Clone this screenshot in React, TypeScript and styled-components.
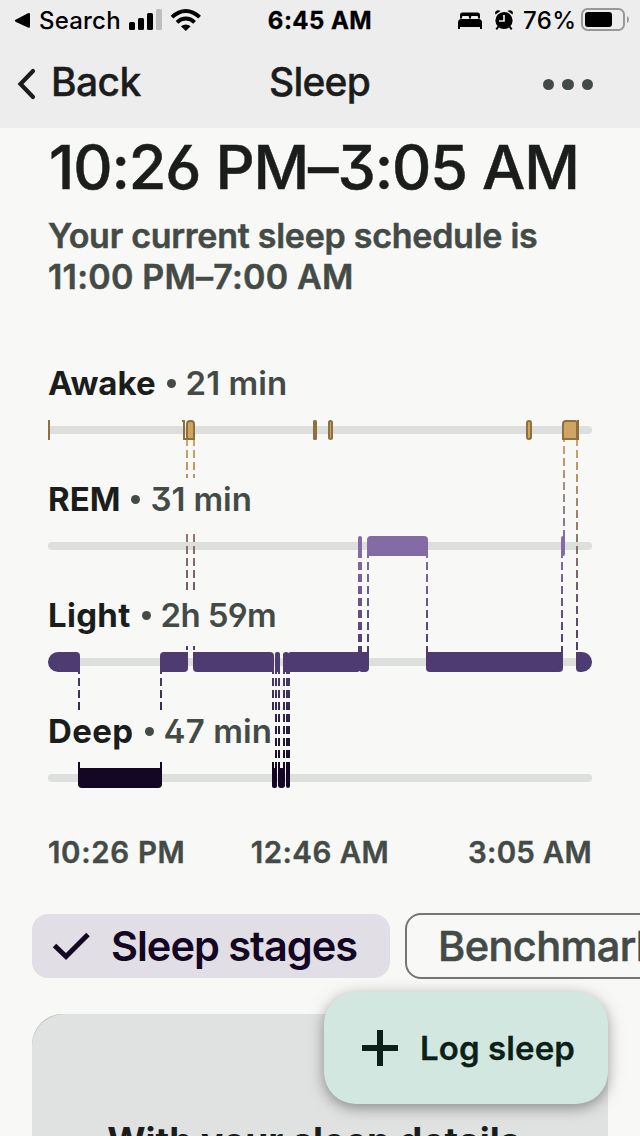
import React from "react";
import styled, { createGlobalStyle } from "styled-components";

const GlobalStyle = createGlobalStyle`
  *, *::before, *::after { box-sizing: border-box; }
  body { margin: 0; background: #f8f9f7; }
`;

const brandFont = `font-family: Inter, "Liberation Sans", sans-serif; font-feature-settings: "calt" 0, "ss01" 1;`;
const systemFont = `font-family: Inter, "Liberation Sans", sans-serif;`;

const Page = styled.div`
  position: relative;
  width: 640px;
  height: 1136px;
  overflow: hidden;
  background: #f8f9f7;
  color: #1b1d1c;
  white-space: nowrap;
  ${systemFont}
`;

const Header = styled.header`
  height: 128px;
  background: #ededed;
`;

const StatusBar = styled.div`
  display: grid;
  grid-template-columns: 1fr auto 1fr;
  height: 40px;
  padding: 0 11px 0 14px;
  color: #000;
  font-size: 24px;
  line-height: 41px;
`;

const StatusGroup = styled.div<{ $end?: boolean }>`
  display: flex;
  align-items: flex-start;
  justify-content: ${(p) => (p.$end ? "flex-end" : "flex-start")};
  svg { display: block; flex: none; }
`;

const StatusText = styled.span<{ $width: number; $tracking: number }>`
  width: ${(p) => p.$width}px;
  font-weight: 500;
  letter-spacing: ${(p) => p.$tracking}px;
`;

const Clock = styled.div`
  margin-right: 3px;
  font-weight: 700;
  letter-spacing: 0.45px;
  -webkit-text-stroke: 0.3px;
`;

const NavBar = styled.nav`
  display: grid;
  grid-template-columns: 1fr auto 1fr;
  align-items: center;
  height: 83px;
  padding: 0 47px 0 17px;
  ${brandFont}
  font-size: 39px;
  font-weight: 500;
  -webkit-text-stroke: 0.4px;
`;

const BackButton = styled.div`
  display: flex;
  align-items: center;
  gap: 14px;
  letter-spacing: -0.6px;
  svg { position: relative; top: 2px; }
`;

const NavTitle = styled.div`
  margin-left: 29px;
  letter-spacing: -0.8px;
`;

const MoreButton = styled.div`
  display: flex;
  justify-content: flex-end;
  gap: 8px;
  padding-top: 6px;
`;

const Dot = styled.i`
  width: 11.5px;
  height: 11.5px;
  border-radius: 50%;
  background: #444b47;
`;

const Main = styled.main`
  padding: 0 32px;
`;

const Section = styled.section`
  padding: 1px 16px 0;
`;

const TimeRange = styled.h1`
  margin: 0;
  padding-left: 1px;
  ${brandFont}
  font-size: 61px;
  font-weight: 500;
  line-height: 76px;
  letter-spacing: -1.12px;
  -webkit-text-stroke: 0.5px;
`;

const Schedule = styled.p`
  margin: 10px 0 0;
  color: #444b47;
  font-size: 34px;
  font-weight: 600;
  line-height: 41px;
  letter-spacing: -0.26px;
  -webkit-text-stroke: 0.5px;
`;

const ScheduleHours = styled.span`
  letter-spacing: 0.22px;
`;

const Chart = styled.div`
  position: relative;
  height: 464px;
  margin-top: 65px;
`;

const ChartDrawing = styled.svg`
  position: absolute;
  left: 0;
  top: 0;
`;

const StageRow = styled.div`
  position: relative;
  height: 116px;
`;

const StageLabel = styled.div`
  display: inline-flex;
  height: 52px;
  padding-right: 2px;
  background: #f8f9f7;
  color: #444b47;
  ${brandFont}
  font-size: 33px;
  font-weight: 600;
  line-height: 42px;
`;

const StageName = styled.span<{ $tracking: number }>`
  color: #1b1d1c;
  font-weight: 700;
  letter-spacing: ${(p) => p.$tracking}px;
`;

const Bullet = styled.i`
  width: 9px;
  height: 9px;
  margin: 17px 10px 0 11px;
  border-radius: 50%;
  background: #444b47;
`;

const StageTime = styled.span<{ $tracking: number }>`
  letter-spacing: ${(p) => p.$tracking}px;
`;

const Axis = styled.div`
  display: grid;
  grid-template-columns: 1fr auto 1fr;
  margin-top: 8px;
  color: #444b47;
  font-size: 29.5px;
  font-weight: 600;
  line-height: 36px;
  letter-spacing: 0.45px;
  -webkit-text-stroke: 0.4px;
  span:first-child { letter-spacing: 0.65px; }
  span:last-child { text-align: right; letter-spacing: 0.25px; }
`;

const Chips = styled.div`
  display: flex;
  align-items: center;
  gap: 15px;
  height: 66px;
  margin-top: 43px;
`;

const Chip = styled.div<{ $selected?: boolean }>`
  display: flex;
  flex: none;
  align-items: center;
  width: ${(p) => (p.$selected ? 358 : 310)}px;
  height: ${(p) => (p.$selected ? 64 : 66)}px;
  padding-left: ${(p) => (p.$selected ? 20 : 31)}px;
  border: ${(p) => (p.$selected ? "0" : "2px solid #727775")};
  border-radius: 16px;
  background: ${(p) => (p.$selected ? "#e1dee6" : "transparent")};
  color: ${(p) => (p.$selected ? "#130723" : "#444b47")};
  font-size: 41.5px;
  font-weight: ${(p) => (p.$selected ? 600 : 500)};
  letter-spacing: ${(p) => (p.$selected ? -1 : -0.6)}px;
  -webkit-text-stroke: ${(p) => (p.$selected ? 0 : 0.6)}px;
  svg { margin-right: 19px; }
`;

const CardEdge = styled.div`
  height: 180px;
  margin-top: 35px;
  border-radius: 31px;
  background: #9fa8a4;
`;

const Card = styled.div`
  height: 100%;
  padding-top: 107px;
  border-radius: 32px;
  background: #dfe2e0;
  text-align: center;
  ${brandFont}
  font-size: 37px;
  font-weight: 700;
  line-height: 40px;
`;

const LogButton = styled.div`
  position: absolute;
  left: 324px;
  top: 992px;
  display: flex;
  align-items: center;
  width: 284px;
  height: 112px;
  padding-left: 38px;
  border-radius: 32px;
  background: #d2e7df;
  box-shadow: 0 4px 12px rgba(0, 0, 0, 0.25), 0 3px 20px rgba(0, 0, 0, 0.16);
  color: #0c1f19;
  ${brandFont}
  font-size: 33px;
  font-weight: 600;
  letter-spacing: 0.1px;
  -webkit-text-stroke: 0.3px;
  svg { margin-right: 22px; }
`;

const COLORS = { awake: "#cfa564", awakeEdge: "#8f6f3c", rem: "#836ca6", light: "#4e3b72", deep: "#130723", track: "#dddfdc" };

/* Bar with its own radius at each corner: top-left, top-right, bottom-right, bottom-left. */
const barPath = (x1: number, x2: number, y: number, [a, b, c, d]: number[]) =>
  `M${x1 + a} ${y}H${x2 - b}a${b} ${b} 0 0 1 ${b} ${b}V${y + 20 - c}a${c} ${c} 0 0 1 ${-c} ${c}H${x1 + d}a${d} ${d} 0 0 1 ${-d} ${-d}V${y + a}a${a} ${a} 0 0 1 ${a} ${-a}z`;

const bars: { y: number; color: string; items: [number, number, number[]][] }[] = [
  { y: 536, color: COLORS.rem, items: [[358, 362, [2, 2, 0, 0]], [367, 428, [4, 4, 0, 0]], [561, 565, [2, 0, 2, 0]]] },
  {
    y: 652,
    color: COLORS.light,
    items: [
      [48, 80, [10, 4, 0, 10]], [160, 188, [4, 0, 4, 0]], [193, 274, [0, 4, 0, 4]], [275, 280, [2, 2, 0, 0]],
      [283, 289, [3, 3, 0, 0]], [288, 360, [3, 0, 3, 0]], [359, 369, [0, 0, 4, 3]], [426, 563, [0, 0, 4, 4]], [576, 592, [0, 10, 10, 4]],
    ],
  },
  { y: 768, color: COLORS.deep, items: [[78, 162, [0, 0, 4, 4]], [272, 277, [0, 0, 2, 2]], [278, 285, [0, 0, 3, 3]], [286, 290, [0, 0, 2, 2]]] },
];

const links: { id: string; from: string; to: string; y1: number; y2: number; start: number; xs: number[] }[] = [
  { id: "awakeLight", from: COLORS.awake, to: COLORS.light, y1: 440, y2: 652, start: 438, xs: [187, 194, 577] },
  { id: "awakeRem", from: COLORS.awake, to: COLORS.rem, y1: 440, y2: 536, start: 434, xs: [564] },
  { id: "remLight", from: COLORS.rem, to: COLORS.light, y1: 556, y2: 652, start: 550, xs: [359, 361, 368, 427, 562] },
  { id: "lightDeep", from: COLORS.light, to: COLORS.deep, y1: 672, y2: 768, start: 666, xs: [79, 161, 273, 276, 279, 284, 287, 289] },
];

function SleepChart() {
  return (
    <ChartDrawing width="544" height="464" viewBox="48 362 544 464">
      <defs>
        {links.map((l) => (
          <linearGradient key={l.id} id={l.id} gradientUnits="userSpaceOnUse" x1="0" x2="0" y1={l.y1} y2={l.y2}>
            <stop offset="0" stopColor={l.from} />
            <stop offset="1" stopColor={l.to} />
          </linearGradient>
        ))}
      </defs>
      {[426, 542, 658, 774].map((y) => (
        <rect key={y} x="48" y={y} width="544" height="8" rx="4" fill={COLORS.track} />
      ))}
      {links.map((l) =>
        l.xs.map((x) => (
          <path key={l.id + x} d={`M${x} ${l.start}V${l.y2 + 2}`} stroke={`url(#${l.id})`} strokeWidth="2" strokeDasharray="8 4" />
        ))
      )}
      {bars.map((row) =>
        row.items.map(([a, b, r]) => <path key={`${row.y}-${a}`} d={barPath(a, b, row.y, r)} fill={row.color} />)
      )}
      <rect x="48" y="420" width="2" height="20" fill={COLORS.awakeEdge} />
      <rect x="313" y="420" width="4" height="20" rx="1.5" fill={COLORS.awakeEdge} />
      <g fill={COLORS.awake} stroke={COLORS.awakeEdge} strokeWidth="2">
        <path d="M182 421h2v18h4" fill="none" />
        <path d="M187 439v-15a3 3 0 0 1 3-3h1a3 3 0 0 1 3 3v15z" />
        <rect x="329" y="421" width="3" height="18" rx="1.5" />
        <rect x="527" y="421" width="4" height="18" rx="2" />
        <path d="M563 439v-15a3 3 0 0 1 3-3h9a3 3 0 0 1 2 1v17z" />
        <path d="M578 420v20" />
      </g>
    </ChartDrawing>
  );
}

const stages = [
  { name: "Awake", time: "21 min", nameTracking: 0, timeTracking: 0.05 },
  { name: "REM", time: "31 min", nameTracking: 0, timeTracking: -0.1 },
  { name: "Light", time: "2h 59m", nameTracking: 0.3, timeTracking: -0.65 },
  { name: "Deep", time: "47 min", nameTracking: 0.4, timeTracking: 0.1 },
];

export default function App() {
  return (
    <Page>
      <GlobalStyle />
      <Header>
        <StatusBar>
          <StatusGroup>
            <svg width="25" height="40" viewBox="14 0 25 40">
              <path d="M16 19.6 28 13.3Q30 12.6 30 14.5V26.5Q30 28.4 28 27.6L16 22Q13.6 20.8 16 19.6z" />
            </svg>
            <StatusText $width={90} $tracking={0.2}>Search</StatusText>
            <svg width="74" height="40" viewBox="129 0 74 40">
              <rect x="129" y="22" width="6" height="8" rx="1.5" />
              <rect x="138" y="18" width="6" height="12" rx="1.5" />
              <rect x="147" y="13" width="6" height="17" rx="1.5" />
              <rect x="156" y="9" width="6" height="21" rx="1.5" fill="#bebebe" />
              <g fill="none" stroke="#000" strokeWidth="3.8">
                <path d="M172 17.2Q178.500 11 185.800 11T199.600 17.200" />
                <path d="M177 22.300Q181 18.500 185.800 18.500T194.600 22.300" />
              </g>
              <path d="M180.900 26.300Q185.800 22.500 190.700 26.300L185.800 31z" />
            </svg>
          </StatusGroup>
          <Clock>6:45 AM</Clock>
          <StatusGroup $end>
            <svg width="65" height="40" viewBox="458 0 65 40">
              <path d="M460 18.500V15q0-2.500 2.500-2.500h15Q480 12.500 480 15v3.500h-2V17q0-1-1-1h-5q-1 0-1 1v1.500h-2V17q0-1-1-1h-5q-1 0-1 1v1.500zM458 22.500q0-3.500 3.500-3.500h17q3.500 0 3.500 3.500V29h-2v-2h-20v2h-2z" />
              <circle cx="504" cy="20.500" r="8.600" />
              <path d="M495.500 14.500q-1.500-3.500 2-4.300 1.800-.3 3 .8zM512.500 14.500q1.500-3.500-2-4.300-1.800-.3-3 .8z" />
              <path d="M498.500 26.500 496.300 29.300M509.500 26.500 511.700 29.300" stroke="#000" strokeWidth="2" />
              <path d="M504 15v6h-5" fill="none" stroke="#ededed" strokeWidth="1.700" />
            </svg>
            <StatusText $width={58} $tracking={0.4}>76%</StatusText>
            <svg width="48" height="40" viewBox="581 0 48 40">
              <rect x="582" y="9" width="42" height="21" rx="5.500" fill="none" stroke="#989898" strokeWidth="2" />
              <rect x="585" y="12" width="27" height="15" rx="3" />
              <path d="M627 16q2 1 2 3.500t-2 3.500z" fill="#989898" />
            </svg>
          </StatusGroup>
        </StatusBar>
        <NavBar>
          <BackButton>
            <svg width="20" height="32" viewBox="0 0 20 32">
              <path d="M16 3 3.500 16 16 29" fill="none" stroke="#1b1d1c" strokeWidth="4.200" strokeLinecap="round" />
            </svg>
            Back
          </BackButton>
          <NavTitle>Sleep</NavTitle>
          <MoreButton><Dot /><Dot /><Dot /></MoreButton>
        </NavBar>
      </Header>
      <Main>
        <Section>
          <TimeRange>10:26 PM–3:05 AM</TimeRange>
          <Schedule>
            Your current sleep schedule is
            <br />
            <ScheduleHours>11:00 PM–7:00 AM</ScheduleHours>
          </Schedule>
          <Chart>
            <SleepChart />
            {stages.map((s) => (
              <StageRow key={s.name}>
                <StageLabel>
                  <StageName $tracking={s.nameTracking}>{s.name}</StageName>
                  <Bullet />
                  <StageTime $tracking={s.timeTracking}>{s.time}</StageTime>
                </StageLabel>
              </StageRow>
            ))}
          </Chart>
          <Axis><span>10:26 PM</span><span>12:46 AM</span><span>3:05 AM</span></Axis>
        </Section>
        <Chips>
          <Chip $selected>
            <svg width="40" height="40" viewBox="0 0 40 40">
              <path d="M2.500 19.500 14 30.500 36 8.500" fill="none" stroke="#130723" strokeWidth="5" />
            </svg>
            Sleep stages
          </Chip>
          <Chip>Benchmark</Chip>
        </Chips>
        <CardEdge><Card>With your sleep details,</Card></CardEdge>
      </Main>
      <LogButton>
        <svg width="36" height="36" viewBox="0 0 36 36"><path d="M15 0h6v15h15v6H21v15h-6V21H0v-6h15z" fill="#0c1f19" /></svg>
        Log sleep
      </LogButton>
    </Page>
  );
}
